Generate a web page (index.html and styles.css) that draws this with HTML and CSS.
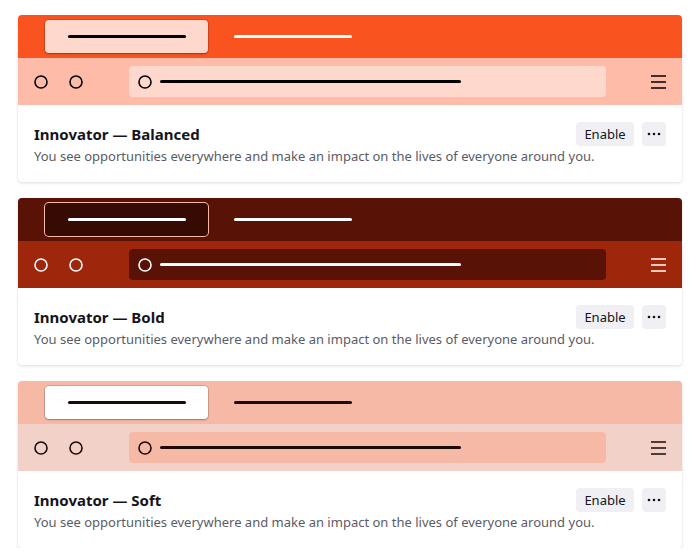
FILE: index.html
```html
<!DOCTYPE html>
<html>
<head>
<meta charset="utf-8">
<link rel="stylesheet" href="styles.css">
</head>
<body>
<div class="list">
  <div class="card theme-balanced">
    <div class="preview">
      <div class="tabs">
        <div class="tab"><span class="line"></span></div>
        <span class="line tab-text"></span>
      </div>
      <div class="toolbar">
        <svg class="nav" width="49" height="14" viewBox="0 0 49 14"><circle cx="7" cy="7" r="6"/><circle cx="42" cy="7" r="6"/></svg>
        <div class="urlbar">
          <svg class="ucircle" width="14" height="14" viewBox="0 0 14 14"><circle cx="7" cy="7" r="6"/></svg>
          <span class="line url-line"></span>
        </div>
        <svg class="menu" width="15" height="14" viewBox="0 0 15 14"><path d="M0 1h15M0 7h15M0 13h15"/></svg>
      </div>
    </div>
    <div class="body">
      <div class="title">Innovator — Balanced</div>
      <div class="actions">
        <button class="btn">Enable</button>
        <button class="btn more"><svg width="14" height="4" viewBox="0 0 14 4"><circle cx="2" cy="2" r="1.3"/><circle cx="7" cy="2" r="1.3"/><circle cx="12" cy="2" r="1.3"/></svg></button>
      </div>
      <div class="desc">You see opportunities everywhere and make an impact on the lives of everyone around you.</div>
    </div>
  </div>

  <div class="card theme-bold">
    <div class="preview">
      <div class="tabs">
        <div class="tab"><span class="line"></span></div>
        <span class="line tab-text"></span>
      </div>
      <div class="toolbar">
        <svg class="nav" width="49" height="14" viewBox="0 0 49 14"><circle cx="7" cy="7" r="6"/><circle cx="42" cy="7" r="6"/></svg>
        <div class="urlbar">
          <svg class="ucircle" width="14" height="14" viewBox="0 0 14 14"><circle cx="7" cy="7" r="6"/></svg>
          <span class="line url-line"></span>
        </div>
        <svg class="menu" width="15" height="14" viewBox="0 0 15 14"><path d="M0 1h15M0 7h15M0 13h15"/></svg>
      </div>
    </div>
    <div class="body">
      <div class="title">Innovator — Bold</div>
      <div class="actions">
        <button class="btn">Enable</button>
        <button class="btn more"><svg width="14" height="4" viewBox="0 0 14 4"><circle cx="2" cy="2" r="1.3"/><circle cx="7" cy="2" r="1.3"/><circle cx="12" cy="2" r="1.3"/></svg></button>
      </div>
      <div class="desc">You see opportunities everywhere and make an impact on the lives of everyone around you.</div>
    </div>
  </div>

  <div class="card theme-soft">
    <div class="preview">
      <div class="tabs">
        <div class="tab"><span class="line"></span></div>
        <span class="line tab-text"></span>
      </div>
      <div class="toolbar">
        <svg class="nav" width="49" height="14" viewBox="0 0 49 14"><circle cx="7" cy="7" r="6"/><circle cx="42" cy="7" r="6"/></svg>
        <div class="urlbar">
          <svg class="ucircle" width="14" height="14" viewBox="0 0 14 14"><circle cx="7" cy="7" r="6"/></svg>
          <span class="line url-line"></span>
        </div>
        <svg class="menu" width="15" height="14" viewBox="0 0 15 14"><path d="M0 1h15M0 7h15M0 13h15"/></svg>
      </div>
    </div>
    <div class="body">
      <div class="title">Innovator — Soft</div>
      <div class="actions">
        <button class="btn">Enable</button>
        <button class="btn more"><svg width="14" height="4" viewBox="0 0 14 4"><circle cx="2" cy="2" r="1.3"/><circle cx="7" cy="2" r="1.3"/><circle cx="12" cy="2" r="1.3"/></svg></button>
      </div>
      <div class="desc">You see opportunities everywhere and make an impact on the lives of everyone around you.</div>
    </div>
  </div>
</div>
</body>
</html>
```

FILE: styles.css
```css
* { box-sizing: border-box; }
html, body { margin: 0; padding: 0; background: #ffffff; }
body {
  font-family: "Noto Sans", "Open Sans", sans-serif;
  color: #15141a;
  padding: 15px 17px 0 18px;
}
.list { display: flex; flex-direction: column; gap: 16px; }
.card {
  width: 664px;
  border-radius: 4px;
  overflow: hidden;
  background: #fff;
  box-shadow: 0 1px 3px rgba(58, 57, 68, 0.18);
}
.preview { display: flex; flex-direction: column; }
.tabs {
  height: 43px;
  display: flex;
  align-items: center;
  padding-left: 27px;
  gap: 26px;
  background: var(--frame);
}
.tab {
  width: 163px;
  height: 33px;
  border-radius: 4px;
  background: var(--tab);
  display: flex;
  align-items: center;
  padding-left: 23px;
  box-shadow: var(--tabshadow);
}
.line {
  display: block;
  width: 118px;
  height: 3px;
  border-radius: 2px;
  background: var(--tabtext);
}
.tab-text { background: var(--frametext); }
.toolbar {
  height: 47px;
  display: flex;
  align-items: center;
  padding: 0 16px;
  background: var(--toolbar);
}
.nav { fill: none; stroke: var(--icon); stroke-width: 1.6; flex: none; }
.urlbar {
  margin-left: 46px;
  width: 477px;
  height: 31px;
  border-radius: 4px;
  background: var(--url);
  display: flex;
  align-items: center;
  padding-left: 9px;
  gap: 8px;
}
.ucircle { fill: none; stroke: var(--urltext); stroke-width: 1.6; flex: none; }
.url-line { width: 301px; background: var(--urltext); }
.menu { margin-left: auto; stroke: var(--icon); stroke-width: 1.5; fill: none; flex: none; }
.body {
  height: 77px;
  display: grid;
  grid-template-columns: 1fr auto;
  grid-template-rows: 24px auto;
  align-items: center;
  align-content: start;
  padding: 17px 16px 0 16px;
}
.title { font-size: 15px; font-weight: 700; line-height: 20px; grid-column: 1; grid-row: 1; }
.actions { display: flex; gap: 8px; grid-column: 2; grid-row: 1; }
.desc {
  grid-column: 1 / 3;
  grid-row: 2;
  font-size: 13px;
  line-height: 18px;
  color: #5b5b66;
  margin-top: 1px;
  white-space: nowrap;
}
.btn {
  font-family: inherit;
  font-size: 13px;
  color: #15141a;
  background: #f0f0f4;
  border: none;
  border-radius: 4px;
  height: 24px;
  width: 58px;
  padding: 0;
}
.btn.more { width: 24px; display: flex; align-items: center; justify-content: center; }
.btn.more svg { fill: #15141a; }

.theme-balanced {
  --frame: #f95420; --tab: #ffd8cd; --tabtext: #000; --frametext: #fff;
  --toolbar: #fdbba8; --url: #ffd8cd; --urltext: #000; --icon: #000;
  --tabshadow: 0 0 0 1px rgba(0,0,0,0.12), 0 1px 2px rgba(0,0,0,0.25);
}
.theme-bold {
  --frame: #591306; --tab: #350b03; --tabtext: #fff; --frametext: #fff;
  --toolbar: #9d260b; --url: #591306; --urltext: #fff; --icon: #fff;
  --tabshadow: 0 0 0 1px #f7b9a6;
}
.theme-soft {
  --frame: #f6b9a6; --tab: #ffffff; --tabtext: #1c0a08; --frametext: #1c0a08;
  --toolbar: #f2d1c8; --url: #f6b9a6; --urltext: #1c0a08; --icon: #1c0a08;
  --tabshadow: 0 0 0 1px rgba(0,0,0,0.12), 0 1px 2px rgba(0,0,0,0.25);
}
```
